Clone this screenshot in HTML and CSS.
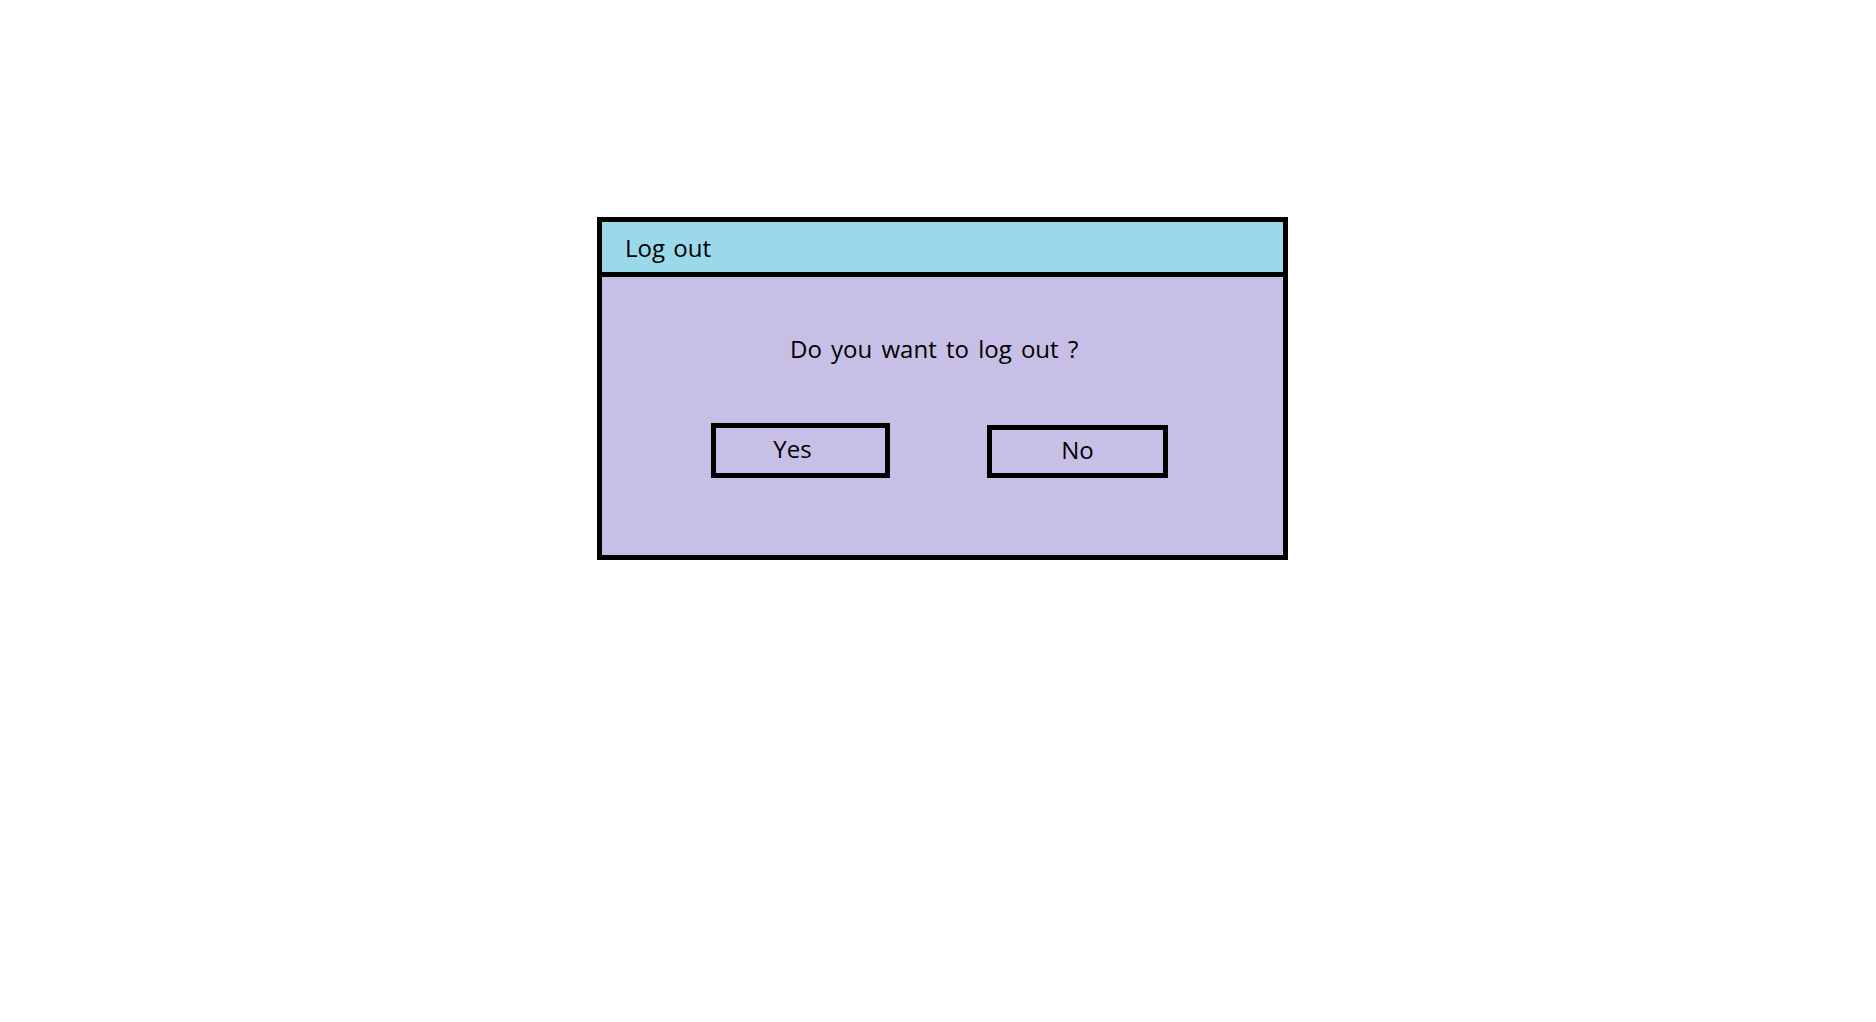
FILE: index.html
```html
<!DOCTYPE html>
<html lang="en">
<head>
<meta charset="utf-8">
<title>Log out</title>
<link rel="stylesheet" href="styles.css">
</head>
<body>
<div class="page">
  <div class="dialog">
    <div class="dialog-header">Log out</div>
    <div class="dialog-body">
      <p class="message">Do you want to log out ?</p>
      <div class="actions">
        <button class="btn btn-yes" type="button">Yes</button>
        <button class="btn btn-no" type="button">No</button>
      </div>
    </div>
  </div>
</div>
</body>
</html>
```

FILE: styles.css
```css
html, body {
  margin: 0;
  padding: 0;
  background: #ffffff;
}

body {
  font-family: "Open Sans", Lato, "Liberation Sans", sans-serif;
  color: #000000;
}

.page {
  padding: 217px 0 0 597px;
}

.dialog {
  box-sizing: border-box;
  width: 691px;
  height: 343px;
  border: 5px solid #000000;
  background: #c8bfe7;
  display: flex;
  flex-direction: column;
}

.dialog-header {
  box-sizing: border-box;
  height: 55px;
  background: #99d9ea;
  border-bottom: 5px solid #000000;
  padding: 12px 0 0 23px;
  font-size: 24px;
  line-height: 28px;
  word-spacing: 2px;
}

.dialog-body {
  flex: 1;
  padding: 58px 0 0 0;
}

.message {
  margin: 0 0 0 188px;
  font-size: 24px;
  line-height: 28px;
  word-spacing: 3px;
}

.actions {
  display: flex;
  align-items: flex-start;
  gap: 97px;
  margin: 60px 0 0 109px;
}

.btn {
  box-sizing: border-box;
  border: 5px solid #000000;
  background: transparent;
  font-family: inherit;
  font-size: 24px;
  line-height: 28px;
  color: #000000;
  padding: 0;
  display: flex;
  align-items: center;
  justify-content: center;
  cursor: pointer;
}

.btn-yes {
  width: 179px;
  height: 55px;
  padding-right: 16px;
  padding-bottom: 3px;
}

.btn-no {
  width: 181px;
  height: 53px;
  margin-top: 2px;
  padding-bottom: 3px;
}
```
